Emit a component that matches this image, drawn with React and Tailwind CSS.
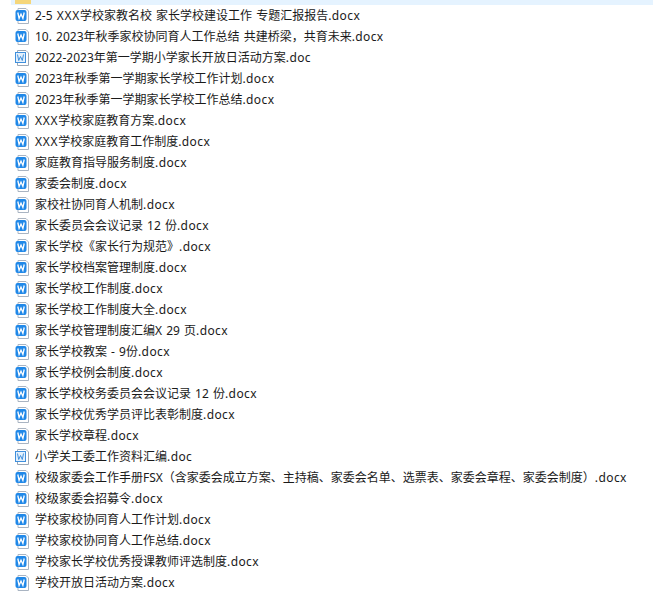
import React from "react";

const files = [
  "2-5 XXX学校家教名校 家长学校建设工作 专题汇报报告.docx",
  "10. 2023年秋季家校协同育人工作总结 共建桥梁，共育未来.docx",
  "2022-2023年第一学期小学家长开放日活动方案.doc",
  "2023年秋季第一学期家长学校工作计划.docx",
  "2023年秋季第一学期家长学校工作总结.docx",
  "XXX学校家庭教育方案.docx",
  "XXX学校家庭教育工作制度.docx",
  "家庭教育指导服务制度.docx",
  "家委会制度.docx",
  "家校社协同育人机制.docx",
  "家长委员会会议记录 12 份.docx",
  "家长学校《家长行为规范》.docx",
  "家长学校档案管理制度.docx",
  "家长学校工作制度.docx",
  "家长学校工作制度大全.docx",
  "家长学校管理制度汇编X 29 页.docx",
  "家长学校教案 - 9份.docx",
  "家长学校例会制度.docx",
  "家长学校校务委员会会议记录 12 份.docx",
  "家长学校优秀学员评比表彰制度.docx",
  "家长学校章程.docx",
  "小学关工委工作资料汇编.doc",
  "校级家委会工作手册FSX（含家委会成立方案、主持稿、家委会名单、选票表、家委会章程、家委会制度）.docx",
  "校级家委会招募令.docx",
  "学校家校协同育人工作计划.docx",
  "学校家校协同育人工作总结.docx",
  "学校家长学校优秀授课教师评选制度.docx",
  "学校开放日活动方案.docx",
];

const DocxIcon = () => (
  <svg width="16" height="16" viewBox="0 0 16 16" className="shrink-0">
    <path d="M4 0.5h8l2.5 2.5v12.5H4z" fill="#fff" stroke="#a9b4c2" />
    <rect x="1.5" y="2" width="11" height="11" rx="2" fill="#2088e8" />
    <path d="M3.8 4.5l1.3 6 1.9-4.4 1.9 4.4 1.3-6" fill="none" stroke="#fff" strokeWidth="1.3" />
  </svg>
);

const DocIcon = () => (
  <svg width="16" height="16" viewBox="0 0 16 16" className="shrink-0">
    <path d="M3.5 0.5h8.5l2.5 2.5v12.5H3.5z" fill="#fff" stroke="#9aa7b6" />
    <rect x="1.5" y="2.5" width="10" height="10" fill="#e3f0fc" stroke="#3f8fdc" />
    <path d="M3.5 4.5l1.2 6 1.8-4 1.8 4 1.2-6" fill="none" stroke="#3f8fdc" />
  </svg>
);

const App = () => {
  return (
    <div className="w-[653px] h-[598px] overflow-hidden bg-white font-['Noto_Sans','Noto_Sans_CJK_SC',sans-serif] text-[12px] text-[#1a1a1a]">
      <div className="ml-[11px] h-[5px] bg-[#e5f3ff] overflow-hidden">
        <div className="ml-[4px] w-[16px] h-[4px] bg-[#f5d67a]" />
      </div>
      <ul>
        {files.map((name) => {
          const dot = name.lastIndexOf(".");
          // the X's run a little wider in the reference
          const parts = name.slice(0, dot).split(/(XXX)/);
          return (
            <li key={name} className="h-[21px] flex items-center pl-[14px] gap-[5px] whitespace-nowrap">
              {name.endsWith(".doc") ? <DocIcon /> : <DocxIcon />}
              <span className="leading-[16px] [word-spacing:1px]">
                {parts.map((part, i) =>
                  part === "XXX" ? (
                    <span key={i} className="tracking-[0.7px]">{part}</span>
                  ) : (
                    part
                  )
                )}
                <span className="tracking-[0.4px]">{name.slice(dot)}</span>
              </span>
            </li>
          );
        })}
      </ul>
    </div>
  );
};

export default App;
